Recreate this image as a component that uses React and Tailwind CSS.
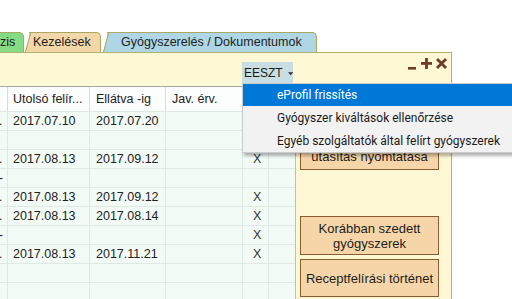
import React from "react";

const rows = [
  { a: ".", d1: "2017.07.10", d2: "2017.07.20", x: false },
  { a: "", d1: "", d2: "", x: false },
  { a: ".", d1: "2017.08.13", d2: "2017.09.12", x: true },
  { a: "-", d1: "", d2: "", x: false },
  { a: ".", d1: "2017.08.13", d2: "2017.09.12", x: true },
  { a: ".", d1: "2017.08.13", d2: "2017.08.14", x: true },
  { a: "-", d1: "", d2: "", x: true },
  { a: ".", d1: "2017.08.13", d2: "2017.11.21", x: true },
  { a: "", d1: "", d2: "", x: false },
  { a: "", d1: "", d2: "", x: false },
];

function Tab({ color, children, className = "", first = false }) {
  return (
    <div
      className={
        "relative h-[20px] flex items-center rounded-tr-[5px] border-t border-r border-[#a8a860] " +
        color +
        " " +
        className
      }
    >
      {!first && (
        <div
          className={
            "absolute left-[-4px] top-[-1px] bottom-0 w-[10px] origin-bottom skew-x-[-15deg] border-l border-t border-[#a8a860] " +
            color
          }
        />
      )}
      <span className="relative">{children}</span>
    </div>
  );
}

function PanelButton({ children, className = "" }) {
  return (
    <div
      className={
        "w-[139px] flex items-center justify-center text-center leading-[15px] bg-[#f6d6a8] border border-[#8a5a30] text-[#1c1c1c] text-[13px] " +
        className
      }
    >
      {children}
    </div>
  );
}

export default function App() {
  return (
    <div
      className="relative w-[512px] h-[299px] overflow-hidden bg-white text-[#1e1e1e]"
      style={{ fontFamily: "'Liberation Sans', Arial, sans-serif" }}
    >
      <div className="h-[32px]" />
      {/* tabs */}
      <div className="flex h-[20px] text-[12.5px] text-[#222]">
        <Tab color="bg-[#86dc84]" first className="w-[24px] pl-0">
          zis
        </Tab>
        <Tab color="bg-[#f3d7a8]" className="ml-[5px] w-[72px] pl-[4px]">
          Kezelések
        </Tab>
        <Tab color="bg-[#aed6e4]" className="ml-[6px] w-[210px] pl-[14px]">
          Gyógyszerelés / Dokumentumok
        </Tab>
      </div>
      {/* panel */}
      <div className="w-[452px] h-[247px] bg-[#fff8d4] border-r border-t border-[#b4b070] flex flex-col">
        {/* toolbar */}
        <div className="h-[31px] flex relative">
          <div className="mt-[9px] ml-[242px] h-[22px] w-[51px] bg-[#c8dee2] flex items-center pl-[2px] text-[12px] text-[#1a1a1a]">
            <span>EESZT</span>
            <svg width="6" height="4" viewBox="0 0 6 4" className="ml-[5px] mt-[1px]">
              <path d="M0 0 L6 0 L3 3.5 Z" fill="#333" />
            </svg>
          </div>
          <div className="ml-auto mr-[4px] mt-[4px] flex items-start gap-[4px]">
            <svg width="10" height="12" viewBox="0 0 10 12" className="mt-[1px]">
              <rect x="1" y="9" width="8" height="2.6" fill="#6e3a2c" />
            </svg>
            <svg width="11" height="11" viewBox="0 0 11 11" className="mt-[1px]">
              <rect x="0" y="4" width="11" height="2.8" fill="#6e3a2c" />
              <rect x="4.1" y="0" width="2.8" height="11" fill="#6e3a2c" />
            </svg>
            <svg width="11" height="11" viewBox="0 0 11 11" className="mt-[1px]">
              <path d="M1 1 L10 10 M10 1 L1 10" stroke="#6e3a2c" strokeWidth="2.8" />
            </svg>
          </div>
        </div>
        {/* body */}
        <div className="flex flex-1 min-h-0">
          {/* table */}
          <div className="w-[295px] mt-[2px] bg-[#f3fbf7] border-t border-[#a8a8a8] text-[12.5px] text-[#222]">
            <div className="grid grid-cols-[8px_82px_76px_77px_26px_26px] h-[24px] bg-[#fcfdfd]">
              <div className="border-r border-[#d8dedb]" />
              <div className="border-r border-[#d8dedb] pl-[5px] flex items-center whitespace-nowrap overflow-hidden">
                Utolsó felír...
              </div>
              <div className="border-r border-[#d8dedb] pl-[6px] flex items-center">Ellátva -ig</div>
              <div className="border-r border-[#d8dedb] pl-[6px] flex items-center">Jav. érv.</div>
              <div className="border-r border-[#d8dedb]" />
              <div />
            </div>
            {rows.map((r, i) => (
              <div
                key={i}
                className="grid grid-cols-[8px_82px_76px_77px_26px_26px] h-[19px] border-t border-[#dfe9e4]"
              >
                <div className="border-r border-[#dfe9e4] flex items-center overflow-hidden text-[12px]">
                  <span className="-ml-[1px]">{r.a}</span>
                </div>
                <div className="border-r border-[#dfe9e4] pl-[5px] flex items-center">{r.d1}</div>
                <div className="border-r border-[#dfe9e4] pl-[6px] flex items-center">{r.d2}</div>
                <div className="border-r border-[#dfe9e4]" />
                <div className="border-r border-[#dfe9e4] pl-[10px] flex items-center text-[#333]">
                  {r.x ? "X" : ""}
                </div>
                <div />
              </div>
            ))}
          </div>
          {/* side panel */}
          <div className="flex-1 border-l border-[#c8c090] pl-[4px] flex flex-col">
            <PanelButton className="mt-[44px] h-[42px] !items-end pb-[5px]">utasítás nyomtatása</PanelButton>
            <PanelButton className="mt-[46px] h-[39px]">
              Korábban szedett
              <br />
              gyógyszerek
            </PanelButton>
            <PanelButton className="mt-[4px] h-[38px]">Receptfelírási történet</PanelButton>
          </div>
        </div>
      </div>

      {/* dropdown menu */}
      <div
        className="absolute left-[242px] top-[83px] w-[272px] bg-[#f2f2f2] border border-[#cccccc] shadow-[2px_3px_3px_rgba(0,0,0,0.3)] text-[12px]"
        style={{ fontFamily: "Roboto, 'Noto Sans', sans-serif" }}
      >
        <div className="h-[22px] bg-[#0078d7] text-white flex items-center pl-[34px]">eProfil frissítés</div>
        <div className="h-[23px] flex items-center pl-[34px] text-[#1a1a1a]">Gyógyszer kiváltások ellenőrzése</div>
        <div className="h-[23px] flex items-center pl-[34px] text-[#1a1a1a]">
          Egyéb szolgáltatók által felírt gyógyszerek
        </div>
      </div>
    </div>
  );
}
